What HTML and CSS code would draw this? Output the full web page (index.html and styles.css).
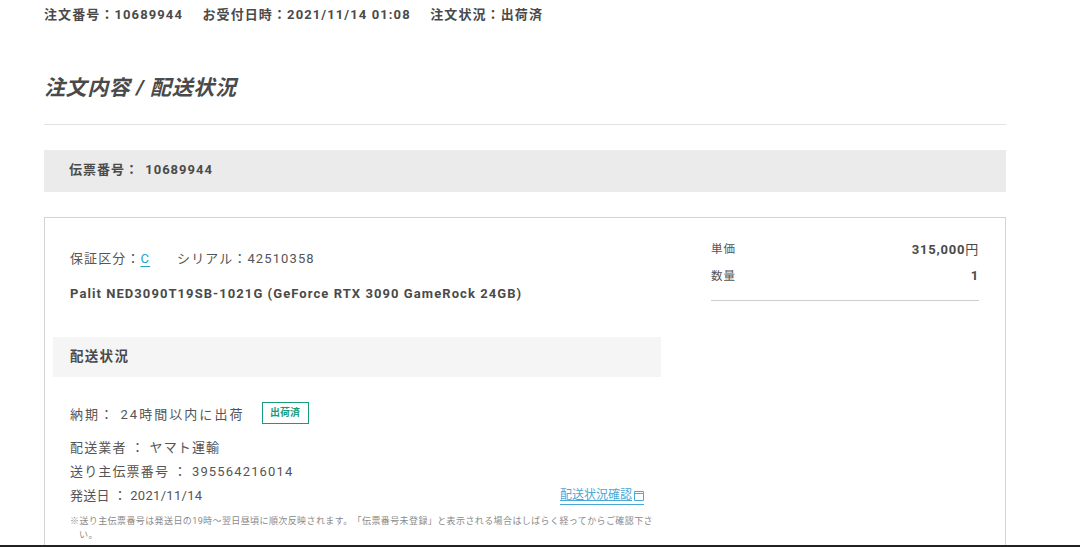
FILE: index.html
```html
<!DOCTYPE html>
<html lang="ja">
<head>
<meta charset="utf-8">
<title>注文内容 / 配送状況</title>
<link rel="stylesheet" href="styles.css">
</head>
<body>
<main class="page">
  <div class="order-meta">
    <span>注文番号：10689944</span>
    <span>お受付日時：2021/11/14 01:08</span>
    <span>注文状況：出荷済</span>
  </div>
  <h1 class="title">注文内容 / 配送状況</h1>
  <div class="slip">伝票番号： <span class="slip-no">10689944</span></div>
  <section class="card">
    <div class="left">
      <div class="item-info">
        <p class="warranty"><span>保証区分：<a class="link" href="#">C</a></span><span>シリアル：42510358</span></p>
        <p class="product">Palit NED3090T19SB-1021G (GeForce RTX 3090 GameRock 24GB)</p>
      </div>
      <h2 class="ship-head">配送状況</h2>
      <div class="ship-body">
        <div class="due"><span>納期： 24時間以内に出荷</span><span class="badge">出荷済</span></div>
        <p class="row">配送業者 ： ヤマト運輸</p>
        <p class="row">送り主伝票番号 ： 395564216014</p>
        <div class="row row-split">
          <span class="ship-date">発送日 ： 2021/11/14</span>
          <a class="track" href="#">配送状況確認<svg class="ext" viewBox="0 0 10 10" width="10" height="10" aria-hidden="true"><path d="M.5 2.5V.5h9v2M.5 2.5h9v7h-9z" fill="none" stroke="currentColor"/></svg></a>
        </div>
        <p class="note">※送り主伝票番号は発送日の19時〜翌日昼頃に順次反映されます。「伝票番号未登録」と表示される場合はしばらく経ってからご確認下さい。</p>
      </div>
    </div>
    <aside class="right">
      <dl class="price">
        <div class="price-row"><dt>単価</dt><dd>315,000<span class="yen">円</span></dd></div>
        <div class="price-row"><dt>数量</dt><dd>1</dd></div>
      </dl>
    </aside>
  </section>
</main>
<div class="edge"></div>
</body>
</html>
```
FILE: styles.css
```css
* { box-sizing: border-box; }
html, body { margin: 0; height: 100%; overflow: hidden; background: #fff; }
body {
  display: flex;
  flex-direction: column;
  font-family: Roboto, "Noto Sans CJK JP", sans-serif;
  color: #4a4a4a;
}
p, h1, h2, dl, dd { margin: 0; }
.page { flex: 1; min-height: 0; overflow: hidden; width: 962px; margin-left: 44px; }
.edge { height: 2px; background: #222; flex: none; }
.order-meta {
  display: flex;
  gap: 19.5px;
  height: 30px;
  line-height: 30px;
  font-size: 13px;
  font-weight: 700;
  letter-spacing: 1.1px;
  white-space: nowrap;
}
.title {
  margin-top: 26px;
  height: 69px;
  padding-top: 1px;
  line-height: 62px;
  font-size: 21px;
  font-weight: 700;
  font-style: italic;
  letter-spacing: 0.6px;
  border-bottom: 1px solid #e2e2e2;
}
.slip {
  margin-top: 25px;
  height: 42px;
  padding-left: 25px;
  line-height: 40px;
  background: #ebebeb;
  font-size: 13px;
  font-weight: 700;
  letter-spacing: 1px;
}
.slip-no { margin-left: 2px; }
.card {
  display: flex;
  margin-top: 25px;
  height: 400px;
  border: 1px solid #d4d4d4;
  border-bottom: 0;
}
.left { width: 608px; margin-left: 8px; flex: none; }
.item-info { padding: 29px 0 0 17px; }
.warranty {
  display: flex;
  gap: 27px;
  line-height: 24px;
  font-size: 13px;
  letter-spacing: 1.1px;
  color: #555;
}
.link { color: #2a9fc4; text-underline-offset: 3px; }
.product {
  margin-top: 12px;
  line-height: 22px;
  font-size: 13px;
  font-weight: 700;
  letter-spacing: 1.07px;
  white-space: nowrap;
}
.ship-head {
  margin-top: 32px;
  height: 40px;
  padding-left: 17px;
  line-height: 38px;
  background: #f5f5f5;
  font-size: 13.5px;
  font-weight: 700;
  letter-spacing: 1.3px;
}
.ship-body { padding: 25px 17px 0; color: #555; }
.due {
  display: flex;
  align-items: center;
  gap: 17px;
  height: 22px;
  font-size: 13px;
  letter-spacing: 2.05px;
}
.badge {
  width: 47px;
  height: 22px;
  line-height: 20px;
  text-align: center;
  border: 1px solid #1a9a7c;
  color: #1a9a7c;
  font-size: 10px;
  font-weight: 700;
  letter-spacing: 0;
}
.row {
  height: 24px;
  line-height: 24px;
  font-size: 13px;
  letter-spacing: 1.15px;
}
.due + .row { margin-top: 12px; }
.row-split { display: flex; justify-content: space-between; }
.ship-date { letter-spacing: 0.3px; }
.track {
  display: flex;
  align-items: center;
  gap: 2px;
  height: 18px;
  margin-top: 3px;
  line-height: 17px;
  font-size: 12px;
  letter-spacing: 0;
  color: #4aa8d8;
  border-bottom: 1px solid #4aa8d8;
}
.ext { margin-top: 1px; }
.note {
  margin-top: 6px;
  width: 590px;
  padding-left: 1em;
  text-indent: -1em;
  line-height: 14px;
  font-size: 9px;
  letter-spacing: 0.4px;
  text-spacing-trim: space-all;
  color: #8a8a8a;
}
.right { flex: 1; padding: 16px 26px 0 50px; }
.price { border-bottom: 1px solid #cfcfcf; height: 67px; }
.price-row {
  display: flex;
  justify-content: space-between;
  align-items: center;
  height: 27px;
}
.price-row dt { font-size: 11.5px; letter-spacing: 1px; color: #555; }
.price-row dd { font-size: 13px; font-weight: 700; letter-spacing: 0.8px; margin-top: 2px; }
.yen { font-weight: 400; }
```
